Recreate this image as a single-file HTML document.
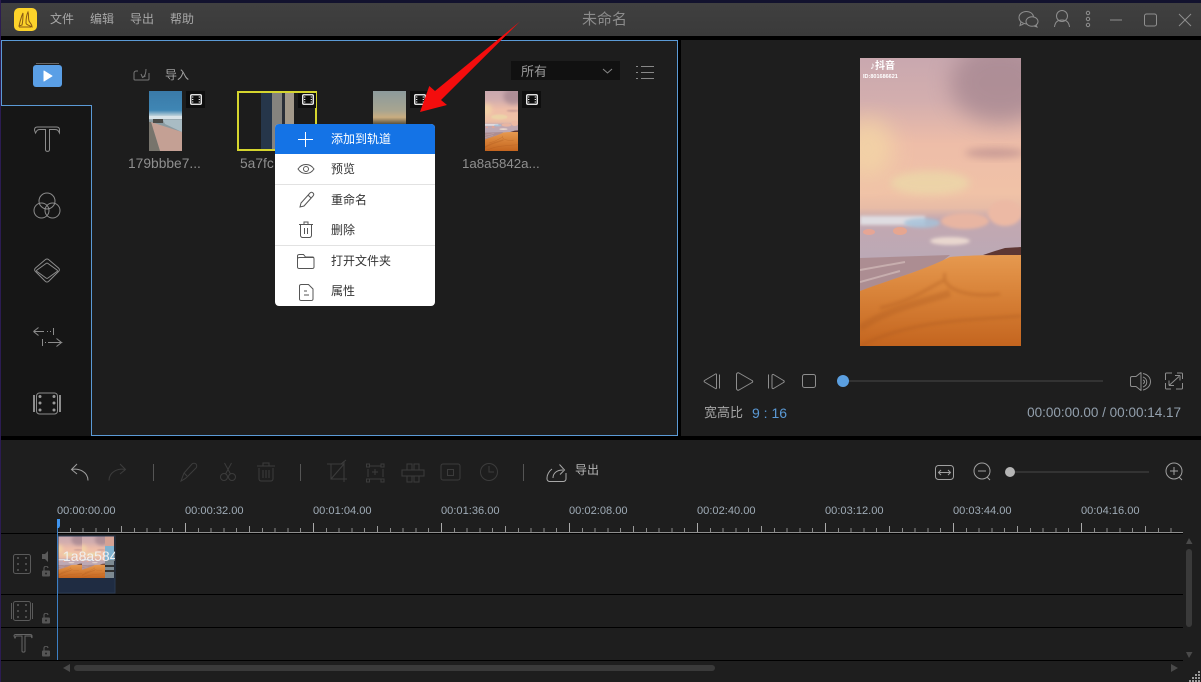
<!DOCTYPE html>
<html lang="zh-CN"><head><meta charset="utf-8"><title>未命名</title>
<style>
html,body{margin:0;padding:0;background:#000;}
#app{position:relative;width:1201px;height:682px;overflow:hidden;background:#000;font-family:"Liberation Sans","Noto Sans CJK SC",sans-serif;}
#app div,#app span{position:absolute;white-space:nowrap;}
svg{position:absolute;left:0;top:0;}
.t{line-height:16px;}
.m{font-size:12px;color:#333;left:331px;}
.r{font-size:11.1px;color:#9fabb6;top:504px;line-height:14px;}
.f{font-size:13.8px;color:#8f8f8f;top:155px;line-height:17px;}
</style></head><body>
<div id="app">
<div style="left:0;top:0;width:1201px;height:3px;background:#12122e"></div>
<div style="left:0;top:0;width:1px;height:682px;background:#2c1c52"></div>
<div style="left:1px;top:3px;width:1200px;height:33px;background:linear-gradient(#404040,#3a3a3a)"></div>
<div style="left:1px;top:40px;width:675px;height:394px;background:#1d1d1d;border:1px solid #5b9ad6"></div>
<div style="left:1px;top:105px;width:90px;height:330px;background:#161616;border-top:1px solid #5b9ad6;border-right:1px solid #5b9ad6;box-sizing:content-box"></div>
<div style="left:681px;top:40px;width:520px;height:396px;background:#1e1e1e"></div>
<div style="left:1px;top:440px;width:1200px;height:242px;background:#1e1e1e"></div>
<div style="left:57px;top:532px;width:1126px;height:1px;background:#8f8f8f"></div>
<div style="left:57px;top:528px;width:1126px;height:4px;background:repeating-linear-gradient(90deg,#8a8a8a 0,#8a8a8a 1px,transparent 1px,transparent 12.8px)"></div>
<div style="left:57px;top:526px;width:1126px;height:6px;background:repeating-linear-gradient(90deg,#999 0,#999 1px,transparent 1px,transparent 64px)"></div>
<div style="left:57px;top:523px;width:1126px;height:9px;background:repeating-linear-gradient(90deg,#aaa 0,#aaa 1px,transparent 1px,transparent 128px)"></div>

<svg width="1201" height="682" viewBox="0 0 1201 682" fill="none">
<defs>
<filter id="b9" x="-80%" y="-80%" width="260%" height="260%"><feGaussianBlur stdDeviation="11"/></filter>
<filter id="b4" x="-50%" y="-50%" width="200%" height="200%"><feGaussianBlur stdDeviation="4"/></filter>
<filter id="b2" x="-50%" y="-50%" width="200%" height="200%"><feGaussianBlur stdDeviation="1.500"/></filter>
<linearGradient id="sky" x1="0" y1="0" x2="0" y2="1"><stop offset="0" stop-color="#c9a8af"/><stop offset=".15" stop-color="#d3aeae"/><stop offset=".3" stop-color="#eebda8"/><stop offset=".47" stop-color="#f0c2a7"/><stop offset=".52" stop-color="#e8bca6"/><stop offset=".56" stop-color="#c3a8b0"/><stop offset=".7" stop-color="#bba9b6"/></linearGradient>
<linearGradient id="sand" x1="0" y1="0" x2="0" y2="1"><stop offset="0" stop-color="#e6994f"/><stop offset=".4" stop-color="#d9843a"/><stop offset="1" stop-color="#c4651f"/></linearGradient>
<linearGradient id="th1" x1="0" y1="0" x2="0" y2="1"><stop offset="0" stop-color="#3a7aa8"/><stop offset=".32" stop-color="#3f86b4"/><stop offset=".42" stop-color="#c5d5dc"/><stop offset=".5" stop-color="#8a9aa0"/></linearGradient>
<linearGradient id="th3" x1="0" y1="0" x2="0" y2="1"><stop offset="0" stop-color="#8c9a9c"/><stop offset=".6" stop-color="#a8a590"/><stop offset=".8" stop-color="#c9ad80"/><stop offset="1" stop-color="#5a5240"/></linearGradient>
<symbol id="beach" viewBox="0 0 161 288" preserveAspectRatio="none">
<rect width="161" height="288" fill="url(#sky)"/>
<ellipse cx="140" cy="25" rx="50" ry="40" fill="#a4858f" opacity=".75" filter="url(#b9)"/>
<ellipse cx="8" cy="90" rx="26" ry="30" fill="#f3d5a6" opacity=".8" filter="url(#b9)"/>
<ellipse cx="70" cy="125" rx="40" ry="12" fill="#ecd5a8" opacity=".9" filter="url(#b4)"/>
<ellipse cx="135" cy="95" rx="30" ry="5" fill="#b98d8e" opacity=".7" filter="url(#b4)"/>
<rect x="0" y="158" width="65" height="9" fill="#e4e6ea" opacity=".85" filter="url(#b2)"/>
<ellipse cx="62" cy="165" rx="18" ry="5" fill="#a4c2da" opacity=".8" filter="url(#b2)"/>
<ellipse cx="145" cy="155" rx="17" ry="13" fill="#ecb9a4" filter="url(#b2)"/>
<ellipse cx="105" cy="163" rx="24" ry="8" fill="#e8b5a2" filter="url(#b2)"/>
<ellipse cx="40" cy="173" rx="7" ry="4" fill="#e6a690"/><ellipse cx="9" cy="174" rx="6" ry="3" fill="#e6a595"/>
<ellipse cx="90" cy="183" rx="20" ry="4" fill="#e9d7cf" filter="url(#b2)"/>
<polygon points="0,200 90,197 80,205 0,233" fill="#ac8d92"/>
<path d="M0 212L45 204M0 224L40 213" stroke="#d3bcba" stroke-width="2" opacity=".7"/>
<polygon points="123,197 135,193 145,190 161,189 161,199 140,198" fill="#5e3733"/>
<path d="M0 233C25 223 60 214 90 199C110 197 140 197 161 197V288H0z" fill="url(#sand)"/>
<path d="M0 270C30 250 60 245 90 235" stroke="#a9561f" stroke-width="7" opacity=".3" filter="url(#b2)"/>
<path d="M85 215C80 232 110 240 140 236M0 288C50 262 110 262 161 258M20 250C60 240 70 228 85 222" stroke="#a9561f" stroke-width="3" opacity=".35" filter="url(#b2)"/>
</symbol>
<symbol id="film" viewBox="0 0 12 11"><rect x=".75" y=".75" width="10.500" height="9.500" rx="1" stroke="#fff" stroke-width="1.300" fill="none"/><path d="M2.700 2.500v1M2.700 5v1M2.700 7.500v1M9.300 2.500v1M9.300 5v1M9.300 7.500v1" stroke="#fff" stroke-width="1.200"/></symbol>
<symbol id="lock" viewBox="0 0 9 11"><rect x="0" y="4.500" width="8" height="6" rx="1" fill="#555"/><path d="M2 4.500V2.500A2 2 0 0 1 6 2" stroke="#555" stroke-width="1.200" fill="none"/><circle cx="4" cy="7.500" r="1" fill="#222"/></symbol>
<clipPath id="cl"><rect x="58" y="536" width="56" height="42"/></clipPath>
</defs>

<!-- logo -->
<rect x="14" y="8" width="23" height="23" rx="5" fill="#fdd32a"/>
<path d="M23 13c-2 4-3 9-4 13l3-1c1-4 1-8 1-12zM28 12c-2 4-2 8-2 11 0 2 3 2 4 3l2 1c0-3-2-4-3-6-1-3 0-6-1-9z" stroke="#8a5a14" stroke-width="1" fill="none"/>
<path d="M19 27h12" stroke="#8a5a14" stroke-width="1"/>

<!-- window controls -->
<g stroke="#8f8f8f" stroke-width="1" fill="none">
<path d="M1027 24c-5-.5-8-3-8-6.500 0-3.500 3.500-6 7.500-6 3.500 0 6.500 2 7 5"/><path d="M1021 22l-1 3.500 3.500-1.500"/>
<ellipse cx="1032" cy="21.500" rx="6" ry="4.800"/><path d="M1036 25l1 2-3-1"/>
<circle cx="1062" cy="16" r="5.500"/><path d="M1054.500 27c.5-5 3-7 7.500-7s7 2 7.500 7"/>
<circle cx="1088" cy="13" r="1.700"/><circle cx="1088" cy="19" r="1.700"/><circle cx="1088" cy="25" r="1.700"/>
<path d="M1110 20h12"/><rect x="1144.500" y="14" width="12" height="12" rx="2"/><path d="M1179 14l12 12M1191 14l-12 12"/>
</g>

<!-- sidebar -->
<path d="M36 63.500h23" stroke="#666"/>
<rect x="33" y="65" width="29" height="22" rx="3" fill="#5a9fe6"/>
<path d="M44 71l8 5-8 5z" fill="#fff" stroke="#fff" stroke-linejoin="round"/>
<g stroke="#8c8c8c" stroke-width="1" fill="none">
<path d="M34.500 130c0-2 1-3 3-3h19c2 0 3 1 3 3v3l-1.500-2.500c-1-1-2-1-3-1h-5.500v20c0 2.500-4 2.500-4 0v-20h-5.500c-1 0-2 0-3 1l-1.500 2.500z"/>
<circle cx="47" cy="201" r="8"/><circle cx="41.500" cy="210.500" r="7.500"/><circle cx="52.500" cy="210.500" r="7.500"/>
<path d="M45.500 259.500c1-.7 2-.7 3 0l10 8.500c1.200 1 1.200 2.500 0 3.500l-10 10c-1 .7-2 .7-3 0l-10-10c-1.200-1-1.200-2.500 0-3.500z"/><path d="M46 263.500c.7-.5 1.300-.5 2 0l9 6.500c.6.5.6 1 0 1.500l-9 6.500c-.7.5-1.300.5-2 0l-9-6.500c-.6-.5-.6-1 0-1.500z"/>
<path d="M33.500 331.500H44M47 331.500h1M50 331.500h1M33.500 331.500l5-4M33.500 331.500l5 4"/><path d="M53.500 328v7"/><path d="M45 342.500h1M48 342.500h13.500l-5-4M61.500 342.500l-5 4"/><path d="M42.500 339v7"/>
<rect x="36.500" y="393" width="21" height="21" rx="3"/>
<path d="M34 395v17M60 395v17" stroke-width="2"/>
</g>
<g fill="#999"><circle cx="40" cy="396.500" r="1.500"/><circle cx="40" cy="403" r="1.500"/><circle cx="40" cy="410" r="1.500"/><circle cx="54" cy="396.500" r="1.500"/><circle cx="54" cy="403" r="1.500"/><circle cx="54" cy="410" r="1.500"/></g>

<!-- import / dropdown -->
<g stroke="#777" stroke-width="1" fill="none"><path d="M138 71h-2c-1 0-2 1-2 2v6c0 .5.5 1 1 1h13c.5 0 1-.5 1-1v-6"/><path d="M141 74l1.500 3.500 3-1.500M142.500 77.500c2-1 3.500-4 3.500-8.500"/></g>
<rect x="511" y="61" width="109" height="19" fill="#111"/>
<path d="M603 69l4.500 4 4.500-4" stroke="#888" fill="none"/>
<g stroke="#888"><path d="M641 66.500h13M641 72.500h13M641 78.500h13M636 66.500h2M636 72.500h2M636 78.500h2"/></g>

<!-- thumbs -->
<rect x="149" y="91" width="33" height="60" fill="url(#th1)"/>
<path d="M149 116h33v3h-33z" fill="#d9e3e8"/>
<polygon points="151,122 182,132 182,151 160,151" fill="#c4a094"/><polygon points="149,122 151,122 160,151 149,151" fill="#77746c"/>
<rect x="153" y="119" width="10" height="4" fill="#4b4b48"/>
<polygon points="163,120 182,120 182,132 165,124" fill="#a9bcc4"/>
<rect x="238" y="92" width="78" height="58" fill="#1c1c1c" stroke="#d5d52e" stroke-width="2"/>
<rect x="261" y="93" width="11" height="56" fill="#26364a"/><rect x="272" y="93" width="10" height="56" fill="#85837e"/><rect x="282" y="93" width="3" height="56" fill="#2a2f38"/><rect x="285" y="93" width="9" height="56" fill="#a3998a"/>
<rect x="373" y="91" width="33" height="33" fill="url(#th3)"/>
<use href="#beach" x="485" y="91" width="33" height="60"/>
<g fill="#0e0e0e"><rect x="186" y="91" width="19" height="17"/><rect x="298" y="93" width="18" height="15"/><rect x="410" y="91" width="19" height="17"/><rect x="522" y="91" width="19" height="17"/></g>
<use href="#film" x="190" y="94" width="12" height="11"/><use href="#film" x="302" y="94" width="12" height="11"/><use href="#film" x="414" y="94" width="12" height="11"/><use href="#film" x="526" y="94" width="12" height="11"/>

<!-- preview -->
<use href="#beach" x="860" y="58" width="161" height="288"/>

<!-- player controls -->
<g stroke="#8e8e8e" stroke-width="1" fill="none" stroke-linejoin="round">
<path d="M716.500 374.500v13.500c0 .5-.5 1-1 .5L704.500 382c-.5-.5-.5-1 0-1.500l11-6.500c.5-.3 1 0 1 .5z"/><path d="M719.500 374.500v14"/>
<path d="M736.500 374.500c0-1.500 1.500-2 2.500-1.500l13 7.500c1 .5 1 1.500 0 2l-13 7.500c-1 .5-2.500 0-2.500-1.500z"/>
<path d="M768.500 374.500v14M772 375.500c0-1 .8-1.300 1.500-1l10 6c1 .5 1 1.500 0 2l-10 6c-.7.3-1.500 0-1.500-1z"/>
<rect x="802.500" y="374.500" width="13" height="13" rx="2"/>
<path d="M1132 376.500h4l5-4v18l-5-4h-4c-1 0-1.500-.5-1.500-1.500v-7c0-1 .5-1.500 1.500-1.500z"/><path d="M1143 373.500c10 2 10 14 0 16.500M1143 377c5 2 5 8 0 10M1143 380c2 .5 2 3 0 3.500"/>
<path d="M1165.500 380v-6c0-.5.5-1 1-1h5.500M1177 373h4.500c.5 0 1 .5 1 1v5M1182.500 383v5c0 .5-.5 1-1 1h-5.500M1171 389h-4.500c-.5 0-1-.5-1-1v-5M1169 385.500l10-9M1180 375.500h-5M1180 375.500v5M1169 385.500h5M1169 385.500v-5"/>
</g>
<rect x="843" y="380" width="260" height="2" fill="#333"/>
<circle cx="843" cy="381" r="6" fill="#5b9fe0"/>

<!-- toolbar -->
<g stroke="#a0a0a0" stroke-width="1" fill="none"><path d="M77 464l-5.500 5.500 5.500 4.500M71.500 469.500c7-1.500 16.500 2 16.500 11"/></g>
<g stroke="#3c3c3c" stroke-width="1" fill="none">
<path d="M120 464l5.500 5.500-5.500 4.500M125.500 469.500c-7-1.500-16.500 2-16.500 11"/>
<path d="M181 481l3-8 8-9c1-1 3-1 4 0s1 3 0 4l-9 9c-2 2-4 3-6 4zM184 473l3 3"/>
<circle cx="224" cy="477" r="3.500"/><circle cx="232" cy="477" r="3.500"/><path d="M225.500 474l6-11M230.500 474l-6-11"/>
<path d="M257 466h18M263 466v-3h6v3M259 468v11c0 1 1 2 2 2h10c1 0 2-1 2-2v-11M263 470v8M266 470v8M269 470v8"/>
<path d="M327 464h4v15h16M331 479l13-15M344 461v21M344 464h-13M341 464l5-4"/>
<path d="M370 466h11M370 479h11M368 469v8M383 469v8M372 472h6M375 469v6"/><rect x="366.500" y="464" width="3" height="3"/><rect x="381" y="464" width="3" height="3"/><rect x="366.500" y="479" width="3" height="3"/><rect x="381" y="479" width="3" height="3"/>
<path d="M407 464h5v6h-5zM414 464h5v6h-5zM407 476h5v6h-5zM414 476h5v6h-5zM402 470h22v6h-22z"/>
<rect x="441" y="464" width="19" height="16" rx="2"/><rect x="447.500" y="469.500" width="6" height="6"/>
<circle cx="489" cy="472" r="8.500"/><path d="M489 466v6h5"/>
</g>
<g stroke="#555"><path d="M153.500 464v17M300.500 464v17M523.500 464v17"/></g>
<g stroke="#a8a8a8" stroke-width="1" fill="none"><path d="M552 469c-3 2-5 6-5 9v1c0 1 1 2.500 2.500 2.500h14c1.500 0 2.500-1.500 2.500-2.500v-6"/><path d="M553 478c0-5 4-8 10-8M559.500 464.500l5 5.500-4.500 4.500"/></g>
<g stroke="#a0a0a0" stroke-width="1" fill="none">
<rect x="935.500" y="465.500" width="18" height="14" rx="3"/><path d="M939 472.500h11M941 470l-2.500 2.500 2.500 2.500M948 470l2.500 2.500-2.500 2.500"/>
<circle cx="982" cy="471" r="8"/><path d="M978 471h8M987 477l3 3"/>
<circle cx="1174" cy="471" r="8"/><path d="M1170 471h8M1174 467v8M1179 477l3 3"/>
</g>
<rect x="1010" y="471" width="139" height="2" fill="#333"/>
<circle cx="1010" cy="472" r="5" fill="#b5b5b5"/>

<!-- tracks -->
<g fill="#000"><rect x="1" y="533" width="1182" height="1"/><rect x="1" y="594" width="1182" height="1"/><rect x="1" y="627" width="1182" height="1"/><rect x="1" y="660" width="1182" height="1"/></g>
<g clip-path="url(#cl)"><use href="#beach" x="58" y="536" width="24" height="42"/><use href="#beach" x="82" y="536" width="23" height="42"/><rect x="105" y="536" width="10" height="42" fill="#7d8a92"/><rect x="105" y="536" width="10" height="10" fill="#d5a294"/><rect x="105" y="546" width="10" height="14" fill="#7fb2d0"/><path d="M105 566h10M105 571h10" stroke="#333" stroke-width="2"/></g>
<rect x="58" y="578" width="57" height="15" fill="#1f2c42"/>
<rect x="58" y="536" width="57" height="57" stroke="#2a3a52" fill="none"/>
<g stroke="#5a5a5a" stroke-width="1" fill="none">
<rect x="13.500" y="554.500" width="17" height="19" rx="2"/>
<rect x="13.500" y="601.500" width="17" height="19" rx="2"/><path d="M11.500 603v16M32.500 603v16"/>
<path d="M14 636c0-1 1-1.500 2-1.500h14c1 0 2 .5 2 1.500v2l-1-2h-6v15c0 1.500-3 1.500-3 0v-15h-6l-1 2z" stroke="#666"/>
</g>
<g fill="#5a5a5a"><circle cx="18" cy="558" r="1"/><circle cx="18" cy="564" r="1"/><circle cx="18" cy="570" r="1"/><circle cx="26" cy="558" r="1"/><circle cx="26" cy="564" r="1"/><circle cx="26" cy="570" r="1"/><circle cx="18" cy="605" r="1"/><circle cx="18" cy="611" r="1"/><circle cx="18" cy="617" r="1"/><circle cx="26" cy="605" r="1"/><circle cx="26" cy="611" r="1"/><circle cx="26" cy="617" r="1"/>
<path d="M42 554h3l3-3v11l-3-3h-3z"/></g>
<use href="#lock" x="42" y="566" width="9" height="11"/><use href="#lock" x="42" y="613" width="9" height="11"/><use href="#lock" x="42" y="646" width="9" height="11"/>
<rect x="57" y="520" width="1" height="140" fill="#3c7fc4"/>
<path d="M57 519h3v7l-1 2h-2z" fill="#3f94ee"/>

<!-- scrollbars -->
<g fill="#4a4a4a"><path d="M1186 544l3-6 3.500 6zM1186 652l3 6 3.500-6zM63 668l7-4v8zM1178 668l-7-4v8z"/></g>
<rect x="1186" y="549" width="6" height="78" rx="3" fill="#3a3a3a"/>
<rect x="74" y="665" width="641" height="6" rx="3" fill="#3a3a3a"/>
<g fill="#999"><rect x="1198" y="671" width="2" height="2"/><rect x="1195" y="674" width="2" height="2"/><rect x="1198" y="674" width="2" height="2"/><rect x="1192" y="677" width="2" height="2"/><rect x="1195" y="677" width="2" height="2"/><rect x="1198" y="677" width="2" height="2"/><rect x="1189" y="680" width="2" height="2"/><rect x="1192" y="680" width="2" height="2"/><rect x="1195" y="680" width="2" height="2"/><rect x="1198" y="680" width="2" height="2"/></g>
</svg>

<!-- titlebar text -->
<div class="t" style="left:50px;top:11px;font-size:12px;color:#a8a8a8">文件</div>
<div class="t" style="left:90px;top:11px;font-size:12px;color:#a8a8a8">编辑</div>
<div class="t" style="left:130px;top:11px;font-size:12px;color:#a8a8a8">导出</div>
<div class="t" style="left:170px;top:11px;font-size:12px;color:#a8a8a8">帮助</div>
<div class="t" style="left:582px;top:12px;font-size:15px;color:#8c8c8c">未命名</div>

<div class="t" style="left:165px;top:67px;font-size:12px;color:#a0a0a0">导入</div>
<div class="t" style="left:521px;top:64px;font-size:13px;color:#999">所有</div>
<div class="f" style="left:128px">179bbbe7...</div>
<div class="f" style="left:240px">5a7fc</div>
<div class="f" style="left:462px;font-size:13.3px">1a8a5842a...</div>

<div style="left:860px;top:60px;font-size:10px;line-height:14px;color:#fff;font-weight:bold"><span style="left:10px;top:0">♪抖音</span><span style="left:3px;top:14px;font-size:5.500px;line-height:7px">ID:801686621</span></div>

<div class="t" style="left:704px;top:405px;font-size:13px;color:#a5a5a5">宽高比</div>
<div class="t" style="left:752px;top:405px;font-size:14px;color:#5b9ad6">9 : 16</div>
<div class="t" style="right:20px;top:405px;font-size:13.500px;color:#93a0ad">00:00:00.00 / 00:00:14.17</div>

<div class="t" style="left:575px;top:462px;font-size:12px;color:#b5b5b5">导出</div>
<div class="r" style="left:57px">00:00:00.00</div>
<div class="r" style="left:185px">00:00:32.00</div>
<div class="r" style="left:313px">00:01:04.00</div>
<div class="r" style="left:441px">00:01:36.00</div>
<div class="r" style="left:569px">00:02:08.00</div>
<div class="r" style="left:697px">00:02:40.00</div>
<div class="r" style="left:825px">00:03:12.00</div>
<div class="r" style="left:953px">00:03:44.00</div>
<div class="r" style="left:1081px">00:04:16.00</div>
<div style="left:58px;top:548px;width:57px;height:17px;overflow:hidden;font-size:14px;line-height:17px;color:#f0f0f0;text-indent:5px">1a8a5842a</div>

<!-- menu -->
<div style="left:275px;top:124px;width:160px;height:182px;background:#fff;border-radius:4px;overflow:hidden">
<div style="left:0;top:0;width:160px;height:30px;background:#1473e6"></div>
<div style="left:0;top:60px;width:160px;height:1px;background:#e2e2e2"></div>
<div style="left:0;top:121px;width:160px;height:1px;background:#e2e2e2"></div>
</div>
<div class="t m" style="top:131px;color:#fff">添加到轨道</div>
<div class="t m" style="top:161px">预览</div>
<div class="t m" style="top:192px">重命名</div>
<div class="t m" style="top:222px">删除</div>
<div class="t m" style="top:253px">打开文件夹</div>
<div class="t m" style="top:283px">属性</div>
<svg width="1201" height="682" viewBox="0 0 1201 682" fill="none">
<path d="M298 139.500h15M305.500 132v15" stroke="#fff" stroke-width="1"/>
<g stroke="#555" stroke-width="1" fill="none">
<path d="M298 169c4-6 12-6 16 0-4 6-12 6-16 0z"/><circle cx="306" cy="169" r="2.500"/>
<path d="M300 207l1-4 9-10c1-1 2-1 3 0s1 2 0 3l-9 10zM308 195l3 3"/>
<path d="M299 224.500h14M304 224.500v-2.500h4v2.500M300.500 224.500v11c0 1 1 2 2 2h7c1 0 2-1 2-2v-11M304.500 228v6M307.500 228v6"/>
<path d="M297.500 259v-3c0-1 1-1.500 2-1.500h4l2 2.500h7c1 0 1.500 1 1.500 2v8c0 1-1 1.500-2 1.500h-12.500c-1 0-2-.5-2-1.500v-8c0-1 1-1.500 2-1.500h14"/>
<path d="M301.500 284.500h7l4.500 4.500v10c0 1-1 1.500-2 1.500h-9.500c-1 0-2-.5-2-1.500v-13c0-1 1-1.500 2-1.500zM304 291h3M304 295h5"/>
</g>
<polygon points="520,21.500 441,100 447,105 420,112 429.300,86 435,91" fill="#f40d0d"/>
</svg>
</div>
</body></html>
